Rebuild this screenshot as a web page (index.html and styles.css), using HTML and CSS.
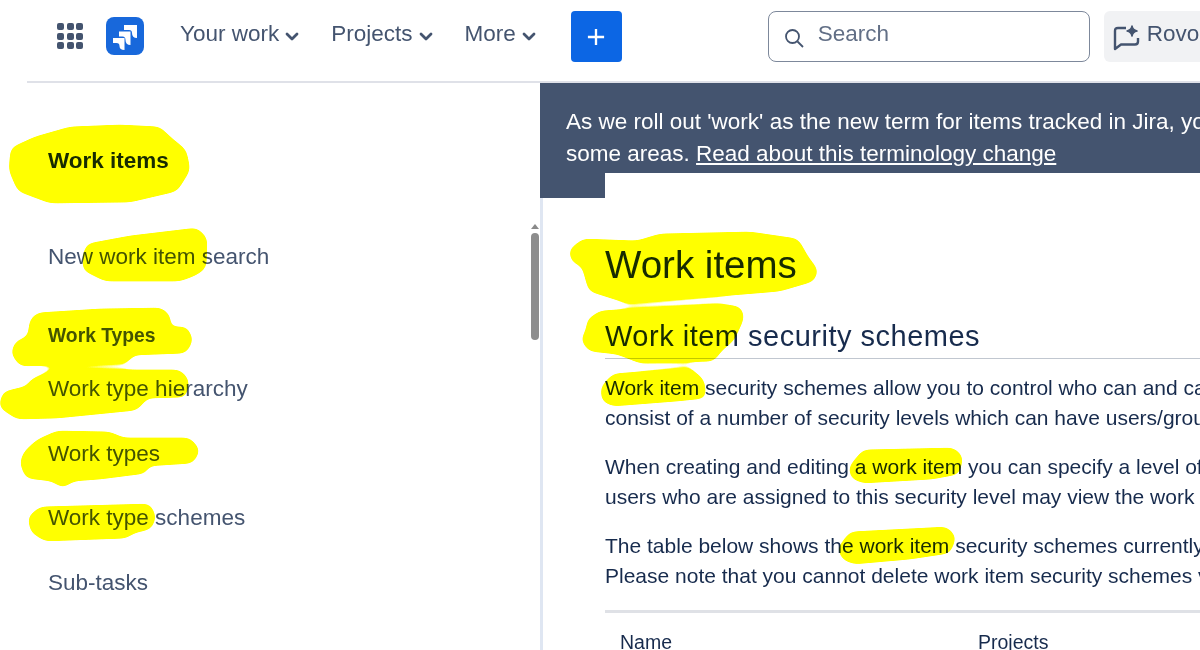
FILE: index.html
```html
<!DOCTYPE html>
<html lang="en">
<head>
<meta charset="utf-8">
<title>Work items</title>
<link rel="stylesheet" href="styles.css">
</head>
<body>
<header class="topbar">
  <svg class="apps" viewBox="0 0 26 26" width="26" height="26" aria-hidden="true">
    <rect x="0" y="0" width="7" height="7" rx="2"/><rect x="10" y="0" width="7" height="7" rx="2"/><rect x="19" y="0" width="7" height="7" rx="2"/>
    <rect x="0" y="10" width="7" height="7" rx="2"/><rect x="10" y="10" width="7" height="7" rx="2"/><rect x="19" y="10" width="7" height="7" rx="2"/>
    <rect x="0" y="19" width="7" height="7" rx="2"/><rect x="10" y="19" width="7" height="7" rx="2"/><rect x="19" y="19" width="7" height="7" rx="2"/>
  </svg>
  <svg class="logo" viewBox="0 0 38 38" width="38" height="38" aria-hidden="true">
    <rect width="38" height="38" rx="8" fill="#1868db"/>
    <path fill="#fff" d="M18 8H31V21Q26 21 26 16Q26 13 23 13H18Z"/>
    <path fill="#fff" d="M13 14.500H24.500V28Q19.500 28 19.500 23Q19.500 19.500 16.500 19.500H13Z"/>
    <path fill="#fff" d="M7 21H18.500V33Q13.500 33 13.500 29Q13.500 26 10.500 26H7Z"/>
  </svg>
  <nav class="menu">
    <a class="menu-item">Your work<svg class="chev" viewBox="0 0 14 9" width="14" height="9"><path d="M2 2l5 5 5-5"/></svg></a>
    <a class="menu-item">Projects<svg class="chev" viewBox="0 0 14 9" width="14" height="9"><path d="M2 2l5 5 5-5"/></svg></a>
    <a class="menu-item">More<svg class="chev" viewBox="0 0 14 9" width="14" height="9"><path d="M2 2l5 5 5-5"/></svg></a>
  </nav>
  <button class="create" aria-label="Create"><svg viewBox="0 0 20 20" width="18" height="18"><path d="M10 1v18M1 10h18"/></svg></button>
  <div class="search">
    <svg viewBox="0 0 20 20" width="20" height="20"><circle cx="8.500" cy="8.500" r="6.500"/><path d="M13.500 13.500L19 19"/></svg>
    <span>Search</span>
  </div>
  <div class="rovo">
    <svg viewBox="0 0 28 26" width="28" height="26"><path d="M13 3H5Q2 3 2 6V24L8 19.500H22Q25 19.500 25 16.500V13"/><path class="spark" d="M19 1Q19.800 5.200 24 6Q19.800 6.800 19 11Q18.200 6.800 14 6Q18.200 5.200 19 1Z"/></svg>
    <span>Rovo</span>
  </div>
</header>

<div class="layout">
  <aside class="sidebar">
    <div class="side-nav">
      <h2 class="side-title">Work items</h2>
      <a class="side-link first">New work item search</a>
      <h3 class="side-head">Work Types</h3>
      <a class="side-link tight">Work type hierarchy</a>
      <a class="side-link">Work types</a>
      <a class="side-link">Work type schemes</a>
      <a class="side-link">Sub-tasks</a>
    </div>
    <div class="scrollbar"><span class="arrow"></span><span class="thumb"></span></div>
  </aside>
  <main class="content">
    <div class="banner">
      <p>As we roll out 'work' as the new term for items tracked in Jira, yo</p>
      <p>some areas. <a>Read about this terminology change</a></p>
    </div>
    <div class="banner-tab"></div>
    <div class="page">
      <h1>Work items</h1>
      <h2 class="section">Work item security schemes</h2>
      <p>Work item security schemes allow you to control who can and ca</p>
      <p class="gap">consist of a number of security levels which can have users/grou</p>
      <p>When creating and editing a work item you can specify a level of</p>
      <p class="gap">users who are assigned to this security level may view the work i</p>
      <p>The table below shows the work item security schemes currently</p>
      <p>Please note that you cannot delete work item security schemes v</p>
      <div class="table-head"><span class="col-name">Name</span><span>Projects</span></div>
    </div>
  </main>
</div>

<svg class="marker" viewBox="0 0 1200 650" width="1200" height="650" aria-hidden="true">
  <defs>
    <filter id="goo" x="-5%" y="-5%" width="110%" height="110%" color-interpolation-filters="sRGB">
      <feGaussianBlur stdDeviation="4.500"/>
      <feColorMatrix values="1 0 0 0 0  0 1 0 0 0  0 0 1 0 0  0 0 0 14 -6"/>
    </filter>
  </defs>
  <g filter="url(#goo)" fill="#ffff00">
    <polygon points="11,148 35,137 70,127 120,125 160,127 170,137 186,150 190,170 177,191 130,202 50,203 18,191 9,170"/>
    <polygon points="87,244 130,236 197,228 207,238 206,268 196,275 180,281 105,281 83,270 83,255"/>
    <polygon points="30,320 37,313 100,309 162,308 171,317 169,327 187,327 193,340 186,353 133,355 127,363 20,366 11,353 16,341 28,337"/>
    <polygon points="30,380 57,368 63,370 180,370 189,380 186,397 147,398 137,410 57,418 17,419 -1,407 3,392 28,386"/>
    <polygon points="37,440 57,431 110,432 123,438 190,438 200,450 193,463 147,466 147,473 100,479 73,481 63,488 52,481 26,478 20,463 24,452"/>
    <polygon points="28,517 40,507 150,504 156,517 151,529 133,533 127,538 45,541 31,532"/>
    <polygon points="569,250 583,239 637,241 660,234 750,232 798,239 808,257 818,270 814,281 780,291 720,296 627,303 589,291 582,266 572,262"/>
    <polygon points="587,320 600,311 720,304 741,307 744,318 734,340 721,351 714,361 640,363 617,354 589,351 581,340 587,328"/>
    <polygon points="601,387 613,374 690,368 704,380 706,398 677,401 613,406 602,401"/>
    <polygon points="849,467 863,450 954,448 963,457 959,474 932,479 863,483 851,478"/>
    <polygon points="838,548 850,532 947,527 956,537 950,553 910,559 854,564 842,559"/>
  </g>
</svg>
</body>
</html>
```

FILE: styles.css
```css
* { box-sizing: border-box; }
html, body { margin: 0; height: 650px; overflow: hidden; background: #fff; }
body { position: relative; width: 1200px; font-family: "Liberation Sans", Arial, sans-serif; color: #172b4d; }
h1, h2, h3, p { margin: 0; font-weight: normal; }

.topbar { display: flex; align-items: center; height: 83px; margin-left: 27px; padding: 0 0 8px 30px; border-bottom: 2px solid #dfe1e8; white-space: nowrap; overflow: hidden; }
.apps { flex: none; fill: #44546f; margin-top: -1px; }
.logo { flex: none; margin-left: 23px; margin-top: -1px; }
.menu { display: flex; gap: 32px; margin-left: 36px; margin-top: -6px; }
.menu-item { display: flex; align-items: center; font-size: 22.500px; color: #44546f; }
.chev { flex: none; margin-left: 6px; margin-top: 6px; fill: none; stroke: #44546f; stroke-width: 2.800; stroke-linecap: round; stroke-linejoin: round; }
.create { flex: none; display: flex; align-items: center; justify-content: center; width: 51px; height: 51px; margin-left: 35px; padding: 0; border: 0; border-radius: 4px; background: #0c66e4; }
.create svg { fill: none; stroke: #fff; stroke-width: 2.600; }
.search { flex: none; display: flex; align-items: center; width: 322px; height: 51px; margin-left: 146px; padding: 0 0 6px 15px; border: 1.500px solid #7d889b; border-radius: 8px; font-size: 22.500px; color: #626f86; }
.search svg { margin: 8px 14px 0 0; fill: none; stroke: #44546f; stroke-width: 1.800; }
.rovo { flex: none; display: flex; align-items: center; width: 120px; height: 51px; margin-left: 14px; padding: 0 0 6px 9px; border-radius: 6px; background: #f1f2f4; font-size: 22.500px; color: #44546f; }
.rovo svg { flex: none; margin: 9px 6px 0 0; fill: none; stroke: #44546f; stroke-width: 2.400; stroke-linejoin: round; }
.rovo .spark { fill: #44546f; stroke-width: 1.500; }

.layout { display: flex; height: 567px; }
.sidebar { flex: none; display: flex; justify-content: space-between; width: 540px; padding-left: 48px; }
.side-nav { display: flex; flex-direction: column; padding-top: 63px; }
.side-title { font-size: 22.500px; font-weight: bold; line-height: 30px; color: #172b4d; }
.side-link { font-size: 22.500px; line-height: 30px; color: #44546f; margin-bottom: 34.700px; }
.side-link.first { margin-top: 66px; margin-bottom: 0; }
.side-head { margin-top: 50px; font-size: 19.300px; font-weight: bold; line-height: 28px; color: #44546f; }
.side-link.tight { margin-top: 24px; }
.scrollbar { display: flex; flex-direction: column; align-items: center; width: 11px; padding-top: 141px; }
.arrow { width: 0; height: 0; border: 4px solid transparent; border-top: 0; border-bottom: 5px solid #8a8a8a; }
.thumb { width: 8px; height: 107px; margin-top: 4px; border-radius: 4px; background: #8d8d8d; }

.content { flex: 1; min-width: 0; display: flex; flex-direction: column; overflow: hidden; white-space: nowrap; }
.banner { flex: none; height: 90px; padding: 23px 0 0 26px; background: #44546f; color: #fff; font-size: 22.500px; line-height: 32px; }
.banner a { text-decoration: underline; }
.banner-tab { flex: none; width: 65px; height: 25px; background: #44546f; }
.page { flex: 1; padding: 37px 0 0 62px; border-left: 3px solid #dfe6f2; }
.page h1 { font-size: 38.500px; line-height: 60px; }
.section { margin-top: 22px; padding-bottom: 3px; border-bottom: 1px solid #c1c7d0; font-size: 29px; letter-spacing: 0.500px; line-height: 38px; }
.page p { font-size: 21px; line-height: 30px; }
.section + p { margin-top: 14px; }
.page p.gap { margin-bottom: 19px; }
.table-head { display: flex; margin-top: 19px; padding: 14px 0 0 15px; border-top: 3px solid #dfe1e6; font-size: 19.500px; line-height: 30px; }
.col-name { width: 358px; }

.marker { position: absolute; left: 0; top: 0; mix-blend-mode: multiply; pointer-events: none; }
```
